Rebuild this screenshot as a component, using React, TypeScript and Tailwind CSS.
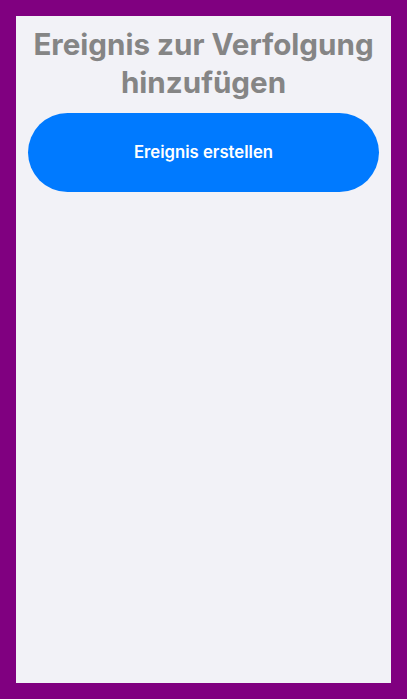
export default function App() {
  return (
    <div className="min-h-screen bg-[#800080] p-4" style={{ fontFamily: 'Inter, "Noto Sans", sans-serif' }}>
      <div className="h-[667px] bg-[#f2f2f7] px-3 pt-[9px]">
        <h1 className="text-center text-[29.6px] leading-[38px] font-bold text-[#858585]">
          Ereignis zur Verfolgung hinzufügen
        </h1>
        <button className="mt-[12px] flex h-[79px] w-full items-center justify-center rounded-full bg-[#007aff] text-[16.7px] font-semibold text-white">
          Ereignis erstellen
        </button>
      </div>
    </div>
  )
}
